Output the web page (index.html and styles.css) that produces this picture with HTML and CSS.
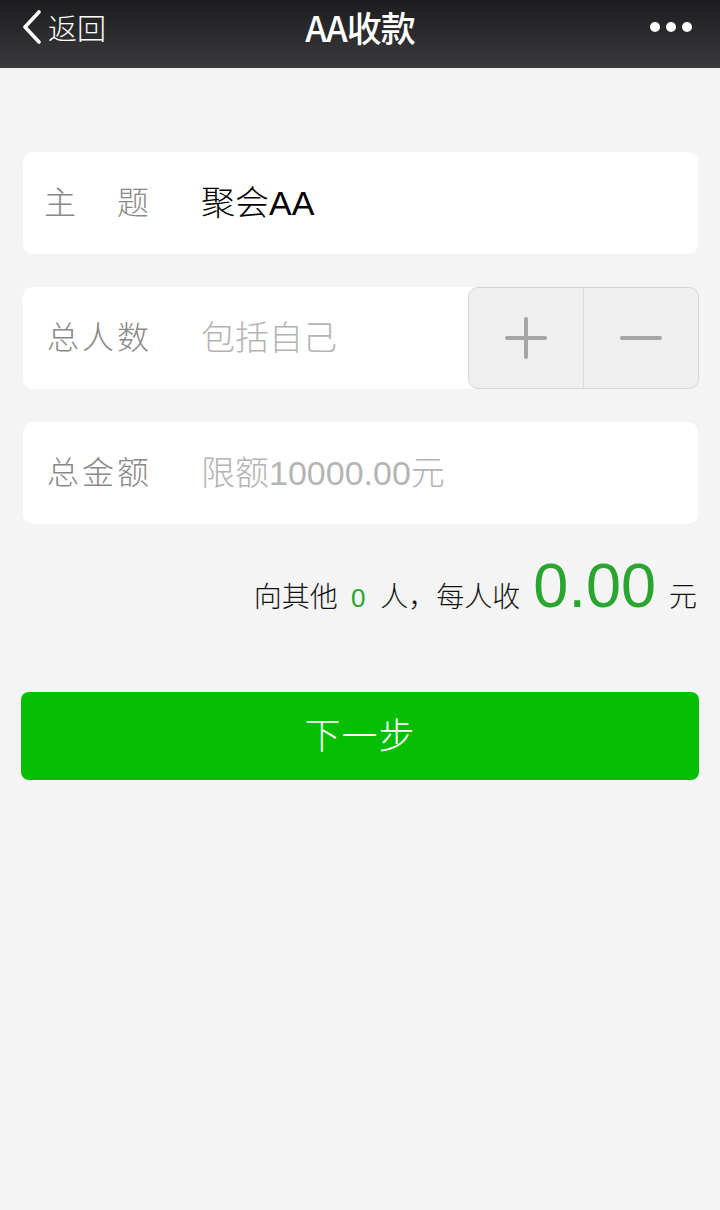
FILE: index.html
```html
<!DOCTYPE html>
<html lang="zh">
<head>
<meta charset="utf-8">
<link rel="stylesheet" href="styles.css">
</head>
<body>
<header class="nav">
  <div class="back">
    <svg class="chev" width="20" height="34" viewBox="0 0 20 34"><path d="M17 2 L3 17 L17 32" fill="none" stroke="#fff" stroke-width="3.6" stroke-linecap="round" stroke-linejoin="round"/></svg>
    <span>返回</span>
  </div>
  <div class="title">AA收款</div>
  <div class="more"><i></i><i></i><i></i></div>
</header>
<main class="content">
  <div class="card">
    <div class="label split"><span>主</span><span>题</span></div>
    <div class="value">聚会AA</div>
  </div>
  <div class="card">
    <div class="label">总人数</div>
    <div class="value ph">包括自己</div>
    <div class="stepper">
      <div class="step"><span class="plus"></span></div>
      <div class="step"><span class="minus"></span></div>
    </div>
  </div>
  <div class="card">
    <div class="label">总金额</div>
    <div class="value ph">限额10000.00元</div>
  </div>
  <div class="summary">
    <span>向其他</span><span class="g cnt">0</span><span>人，每人收</span><span class="g amt">0.00</span><span>元</span>
  </div>
  <button class="next">下一步</button>
</main>
</body>
</html>
```

FILE: styles.css
```css
html, body { margin: 0; padding: 0; }
body {
  width: 720px;
  height: 1210px;
  background: #f4f4f4;
  font-family: "Liberation Sans", "Noto Sans CJK SC", sans-serif;
  overflow: hidden;
}
.nav {
  height: 68px;
  background: linear-gradient(#1c1c1f, #3b3b3d);
  display: flex;
  align-items: center;
  justify-content: space-between;
  padding: 0 28px 14px 22px;
  box-sizing: border-box;
  position: relative;
  color: #fff;
}
.back { display: flex; align-items: center; gap: 6px; font-size: 29px; }
.back span { font-family: "Noto Sans CJK SC", sans-serif; font-weight: 300; line-height: 34px; }
.title {
  position: absolute; left: 0; right: 0; top: 0; height: 52px;
  display: flex; align-items: center; justify-content: center;
  font-size: 35px; font-weight: 500; letter-spacing: -1px;
  font-family: "Noto Sans CJK SC", sans-serif;
  pointer-events: none;
}
.more { display: flex; gap: 6px; }
.more i { width: 10px; height: 10px; border-radius: 50%; background: #fff; display: block; }
.content { padding: 84px 22px 0 23px; display: flex; flex-direction: column; }
.card {
  height: 102px;
  background: #fff;
  border-radius: 10px;
  display: flex;
  align-items: center;
  margin-bottom: 33px;
  padding-left: 22px;
  box-sizing: border-box;
}
.label {
  width: 105px;
  font-size: 32px;
  color: #888;
  letter-spacing: 3px;
  font-family: "Noto Sans CJK SC", sans-serif;
  font-weight: 300;
  margin-left: 2px;
  padding-bottom: 6px;
  white-space: nowrap;
}
.label.split { display: flex; justify-content: space-between; letter-spacing: 0; margin-left: -1px; width: 105px; margin-right: 3px; }
.value {
  margin-left: 49px;
  font-size: 34px;
  color: #000;
  flex: 1;
  font-weight: 300;
  padding-bottom: 6px;
}
.value.ph { color: #b4b4b4; }
.stepper {
  width: 231px; height: 102px;
  margin-right: -1px;
  box-sizing: border-box;
  border: 1px solid #d6d6d6;
  border-radius: 10px;
  background: #efefef;
  display: flex;
}
.step { flex: 1; display: flex; align-items: center; justify-content: center; position: relative; }
.step + .step { border-left: 1px solid #dadada; }
.plus, .minus { position: relative; width: 42px; height: 42px; display: block; }
.plus::before, .minus::before {
  content: ""; position: absolute; left: 0; top: 19px; width: 42px; height: 4px; border-radius: 2px; background: #a6a6a6;
}
.plus::after {
  content: ""; position: absolute; top: 0; left: 19px; width: 4px; height: 42px; border-radius: 2px; background: #a6a6a6;
}
.summary {
  margin-top: -14px;
  height: 84px;
  display: flex;
  align-items: baseline;
  justify-content: flex-end;
  font-size: 28px;
  color: #111;
  font-family: "Noto Sans CJK SC", sans-serif;
  font-weight: 300;
  padding-right: 1px;
}
.summary span { line-height: 84px; }
.g { color: #2aa52f; font-family: "Liberation Sans", sans-serif; }
.cnt { font-size: 26px; margin: 0 15px 0 13px; }
.amt { font-size: 63px; margin: 0 13px 0 13px; }
.next {
  margin-top: 65px;
  margin-left: -2px;
  width: 678px;
  height: 88px;
  border: none;
  border-radius: 8px;
  background: #06be04;
  color: #fff;
  font-size: 36px;
  font-family: "Noto Sans CJK SC", sans-serif;
  font-weight: 300;
  letter-spacing: 1px;
  padding: 0 0 6px 0;
}
```
